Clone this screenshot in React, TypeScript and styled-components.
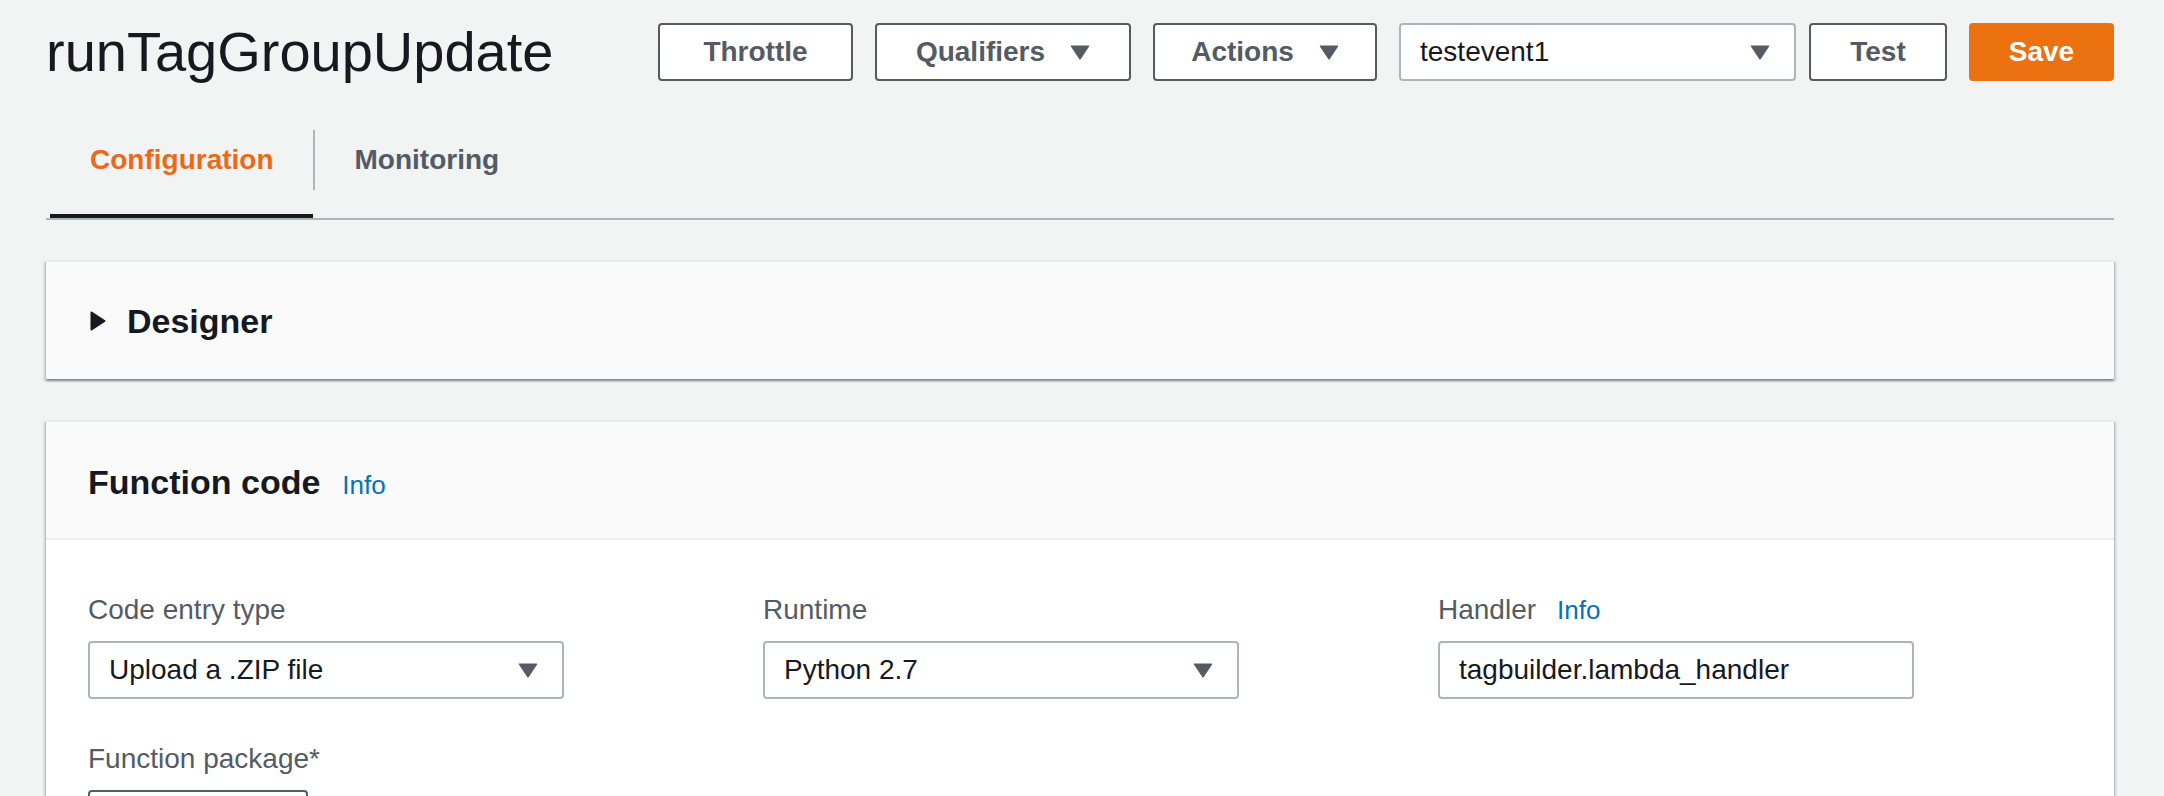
import React from "react";
import styled, { createGlobalStyle } from "styled-components";

const GlobalStyle = createGlobalStyle`
  html, body { margin: 0; padding: 0; background: #f2f3f3; }
  body { font-family: "Liberation Sans", Arial, sans-serif; color: #16191f; }
  * { box-sizing: border-box; }
`;

const Page = styled.div`
  padding: 0 50px 0 46px;
`;

const Header = styled.header`
  display: flex;
  align-items: flex-start;
  justify-content: space-between;
  padding-top: 23px;
`;

const Title = styled.h1`
  margin: 0;
  font-size: 56px;
  line-height: 58px;
  font-weight: 400;
  color: #16191f;
`;

const Toolbar = styled.div`
  display: flex;
  align-items: center;
  gap: 22px;
`;

const Pair = styled.div`
  display: flex;
  align-items: center;
  gap: 13px;
`;

const Button = styled.button<{ $w: number; $primary?: boolean }>`
  width: ${(p) => p.$w}px;
  height: 58px;
  display: inline-flex;
  align-items: center;
  justify-content: center;
  gap: 25px;
  padding: 0;
  border: 2px solid ${(p) => (p.$primary ? "#ec7211" : "#545b64")};
  border-radius: 4px;
  background: ${(p) => (p.$primary ? "#ec7211" : "#ffffff")};
  color: ${(p) => (p.$primary ? "#ffffff" : "#545b64")};
  font-family: "Liberation Sans", Arial, sans-serif;
  font-weight: 700;
  font-size: 28px;
  cursor: pointer;
`;

const SelectBox = styled.div<{ $w: string }>`
  width: ${(p) => p.$w};
  height: 58px;
  display: flex;
  align-items: center;
  justify-content: space-between;
  padding: 0 24px 0 19px;
  border: 2px solid #aab7b8;
  border-radius: 4px;
  background: #ffffff;
  color: #16191f;
  font-size: 28px;
`;

const InputBox = styled.div`
  width: 476px;
  height: 58px;
  display: flex;
  align-items: center;
  padding: 0 19px;
  border: 2px solid #aab7b8;
  border-radius: 4px;
  background: #ffffff;
  color: #16191f;
  font-size: 28px;
`;

const Caret = () => (
  <svg width="20" height="15" viewBox="0 0 20 15" aria-hidden="true">
    <path d="M1.5 1.2 H18.5 L10 13.8 Z" fill="#545b64" stroke="#545b64" strokeWidth="1.5" strokeLinejoin="round" />
  </svg>
);

const ExpandIcon = () => (
  <svg width="16" height="20" viewBox="0 0 16 20" aria-hidden="true">
    <path d="M1.5 1.5 L14.5 10 L1.5 18.5 Z" fill="#16191f" stroke="#16191f" strokeWidth="2" strokeLinejoin="round" />
  </svg>
);

const UploadIcon = () => (
  <svg width="24" height="24" viewBox="0 0 24 24" aria-hidden="true">
    <path d="M12 17 V4 M6 10 L12 4 L18 10 M4 20 H20" fill="none" stroke="#545b64" strokeWidth="2.5" strokeLinecap="round" strokeLinejoin="round" />
  </svg>
);

const TabList = styled.nav`
  display: flex;
  align-items: flex-start;
  margin-top: 49px;
  padding-left: 4px;
  border-bottom: 2px solid #aab7b8;
`;

const Tab = styled.button<{ $active?: boolean }>`
  background: none;
  border: none;
  border-bottom: 4px solid ${(p) => (p.$active ? "#16191f" : "transparent")};
  padding: 0 39px 24px 40px;
  margin: 0;
  font-family: "Liberation Sans", Arial, sans-serif;
  font-weight: 700;
  font-size: 28px;
  line-height: 60px;
  color: ${(p) => (p.$active ? "#eb6a1a" : "#545b64")};
  cursor: pointer;
`;

const TabDivider = styled.span`
  width: 2px;
  height: 60px;
  background: #aab7b8;
`;

const Card = styled.section<{ $gap: number }>`
  margin-top: ${(p) => p.$gap}px;
  background: #ffffff;
  border-top: 2px solid #eaeded;
  box-shadow: 0 2px 2px 0 rgba(0, 28, 36, 0.3), 2px 2px 2px 0 rgba(0, 28, 36, 0.15),
    -2px 2px 2px 0 rgba(0, 28, 36, 0.15);
`;

const CollapsedHeader = styled.div`
  height: 117px;
  display: flex;
  align-items: center;
  gap: 21px;
  padding: 0 44px;
  background: #fafafa;
`;

const CardHeader = styled.div`
  display: flex;
  align-items: baseline;
  gap: 22px;
  padding: 40px 42px 36px;
  background: #fafafa;
  border-bottom: 2px solid #eaeded;
`;

const CardTitle = styled.h2`
  margin: 0;
  font-size: 34px;
  line-height: 40px;
  font-weight: 700;
  color: #16191f;
`;

const InfoLink = styled.a`
  color: #0073bb;
  font-size: 26px;
  text-decoration: none;
  cursor: pointer;
`;

const CardBody = styled.div`
  display: grid;
  grid-template-columns: repeat(3, 1fr);
  column-gap: 41px;
  row-gap: 40px;
  padding: 50px 42px 60px;
`;

const Field = styled.div`
  display: flex;
  flex-direction: column;
  gap: 11px;
`;

const Label = styled.div`
  display: flex;
  align-items: baseline;
  gap: 21px;
  font-size: 28px;
  line-height: 40px;
  color: #545b64;
`;

const UploadButton = styled.button`
  width: 220px;
  height: 58px;
  display: inline-flex;
  align-items: center;
  justify-content: center;
  padding: 0;
  border: 2px solid #545b64;
  border-radius: 4px;
  background: #ffffff;
  cursor: pointer;
`;

export default function App() {
  return (
    <>
      <GlobalStyle />
      <Page>
        <Header>
          <Title>runTagGroupUpdate</Title>
          <Toolbar>
            <Button $w={195}>Throttle</Button>
            <Button $w={256}>
              Qualifiers <Caret />
            </Button>
            <Button $w={224}>
              Actions <Caret />
            </Button>
            <Pair>
              <SelectBox $w="397px">
                <span>testevent1</span>
                <Caret />
              </SelectBox>
              <Button $w={138}>Test</Button>
            </Pair>
            <Button $w={145} $primary>
              Save
            </Button>
          </Toolbar>
        </Header>

        <TabList>
          <Tab $active>Configuration</Tab>
          <TabDivider />
          <Tab>Monitoring</Tab>
        </TabList>

        <Card $gap={40}>
          <CollapsedHeader>
            <ExpandIcon />
            <CardTitle>Designer</CardTitle>
          </CollapsedHeader>
        </Card>

        <Card $gap={41}>
          <CardHeader>
            <CardTitle>Function code</CardTitle>
            <InfoLink>Info</InfoLink>
          </CardHeader>
          <CardBody>
            <Field>
              <Label>Code entry type</Label>
              <SelectBox $w="476px">
                <span>Upload a .ZIP file</span>
                <Caret />
              </SelectBox>
            </Field>
            <Field>
              <Label>Runtime</Label>
              <SelectBox $w="476px">
                <span>Python 2.7</span>
                <Caret />
              </SelectBox>
            </Field>
            <Field>
              <Label>
                Handler <InfoLink>Info</InfoLink>
              </Label>
              <InputBox>tagbuilder.lambda_handler</InputBox>
            </Field>
            <Field>
              <Label>Function package*</Label>
              <UploadButton aria-label="Upload">
                <UploadIcon />
              </UploadButton>
            </Field>
          </CardBody>
        </Card>
      </Page>
    </>
  );
}
